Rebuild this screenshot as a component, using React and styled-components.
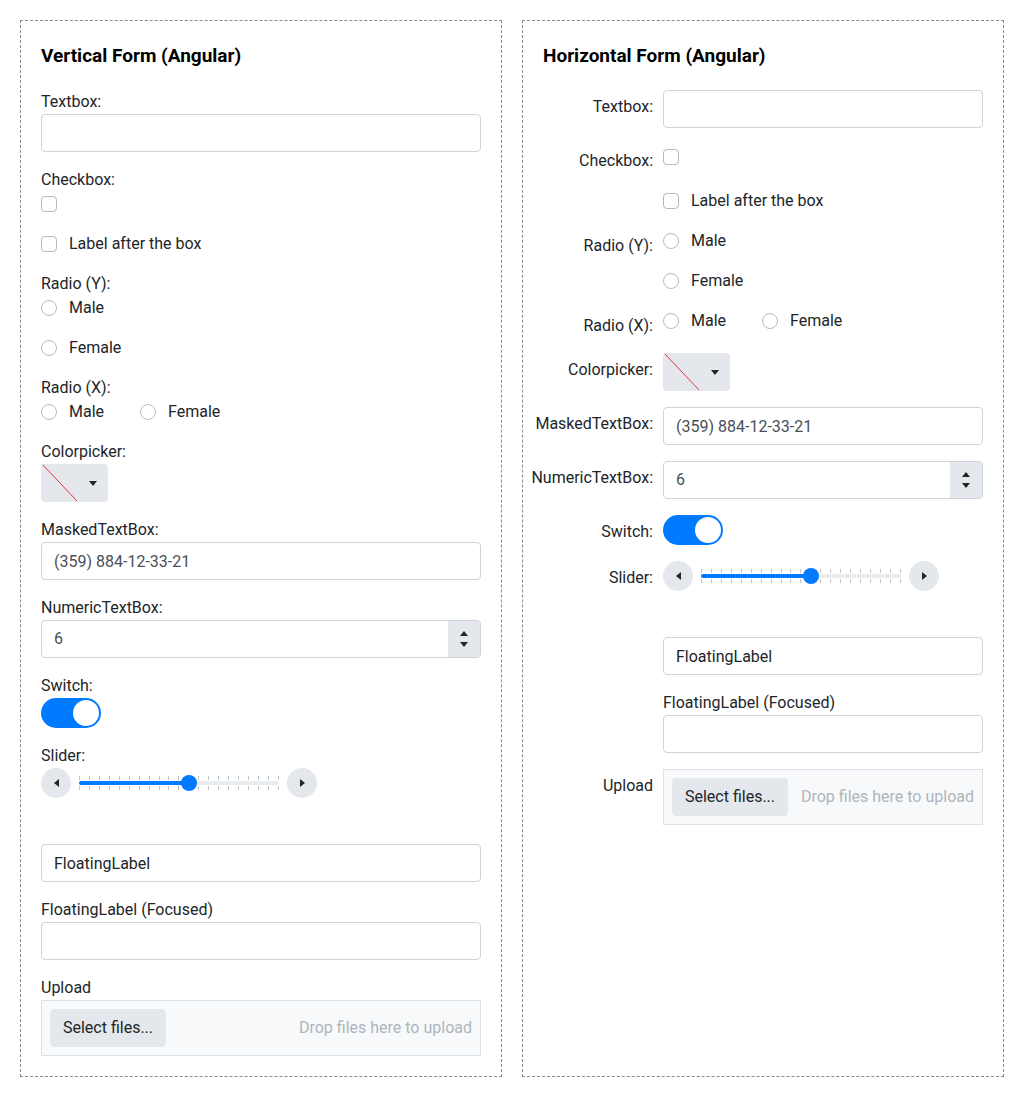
import React from 'react';
import styled, { createGlobalStyle } from 'styled-components';

const Global = createGlobalStyle`
  html, body { margin: 0; padding: 0; background: #fff; }
  body {
    font-family: Roboto, "Liberation Sans", Arial, sans-serif;
    font-size: 16px;
    line-height: 24px;
    color: #212529;
  }
  * { box-sizing: border-box; }
`;

const Page = styled.div`
  display: flex;
  gap: 20px;
  padding: 20px;
  align-items: stretch;
`;

const Panel = styled.section`
  width: 482px;
  border: 1px dashed #8a8a8a;
  padding: 20px;
  display: flex;
  flex-direction: column;
`;

const Title = styled.h3`
  margin: 0 0 20px;
  padding-top: 1px;
  font-size: 19px;
  line-height: 28px;
  font-weight: 700;
  color: #000;
`;

const Stack = styled.div`
  display: flex;
  flex-direction: column;
  gap: 16px;
`;

const Field = styled.div`
  display: flex;
  flex-direction: column;
`;

const Label = styled.label`
  display: block;
  line-height: 24px;
`;

const HRow = styled.div`
  display: flex;
  align-items: flex-start;
  gap: 10px;
`;

const HLabel = styled.label`
  flex: 0 0 110px;
  min-width: 0;
  display: flex;
  justify-content: flex-end;
  white-space: nowrap;
  padding-top: 5px;
  max-height: 28px;
  line-height: 24px;
`;

const HControl = styled.div`
  flex: 1;
  min-width: 0;
  padding-top: ${(p) => p.$pt || 0}px;
`;

const Input = styled.input`
  display: block;
  width: 100%;
  height: 38px;
  border: 1px solid #ced4da;
  border-radius: 4px;
  padding: 0 12px;
  font: inherit;
  color: #495057;
  background: #fff;
  outline: none;
  &::placeholder { color: #212529; opacity: 1; }
`;

const CheckLine = styled.label`
  display: flex;
  align-items: center;
  gap: 12px;
  height: 24px;
`;

const Box = styled.span`
  flex: none;
  width: 16px;
  height: 16px;
  border: 1px solid #b4bac0;
  border-radius: ${(p) => (p.$round ? '50%' : '4px')};
  background: #fff;
`;

const RadioList = styled.div`
  display: flex;
  flex-direction: ${(p) => (p.$row ? 'row' : 'column')};
  gap: ${(p) => (p.$row ? '36px' : '16px')};
`;

const Picker = styled.div`
  width: 67px;
  height: 38px;
  background: #e4e7eb;
  border-radius: 4px;
  display: flex;
  align-items: center;
  overflow: hidden;
`;

const Swatch = styled.svg`
  flex: none;
  width: 36px;
  height: 38px;
  display: block;
`;

const ArrowBox = styled.span`
  flex: 1;
  display: flex;
  justify-content: center;
  align-items: center;
`;

const Tri = styled.span`
  width: 0;
  height: 0;
  border-left: ${(p) => (p.$dir === 'right' ? '5px solid #212529' : '4px solid transparent')};
  border-right: ${(p) => (p.$dir === 'left' ? '5px solid #212529' : '4px solid transparent')};
  border-top: ${(p) =>
    p.$dir === 'down' ? '5px solid #212529' : p.$dir === 'up' ? 'none' : '4px solid transparent'};
  border-bottom: ${(p) =>
    p.$dir === 'up' ? '5px solid #212529' : p.$dir === 'down' ? 'none' : '4px solid transparent'};
  ${(p) => (p.$dir === 'left' ? 'border-left: none;' : '')}
  ${(p) => (p.$dir === 'right' ? 'border-right: none;' : '')}
`;

const NumericWrap = styled.div`
  display: flex;
  height: 38px;
  border: 1px solid #ced4da;
  border-radius: 4px;
  overflow: hidden;
  background: #fff;
`;

const NumInput = styled.input`
  flex: 1;
  min-width: 0;
  border: none;
  padding: 0 12px;
  font: inherit;
  color: #495057;
  outline: none;
  background: transparent;
`;

const Spinner = styled.div`
  flex: 0 0 32px;
  background: #e4e7eb;
  display: flex;
  flex-direction: column;
  align-items: center;
  justify-content: center;
  gap: 6px;
`;

const SwitchTrack = styled.span`
  display: flex;
  align-items: center;
  justify-content: flex-end;
  width: 60px;
  height: 30px;
  border-radius: 15px;
  background: #007bff;
  padding: 0 2px;
`;

const Knob = styled.span`
  width: 26px;
  height: 26px;
  border-radius: 50%;
  background: #fff;
`;

const SliderWrap = styled.div`
  display: flex;
  align-items: center;
  gap: 8px;
  height: 30px;
`;

const SliderBtn = styled.span`
  flex: none;
  width: 30px;
  height: 30px;
  border-radius: 50%;
  background: #e4e7eb;
  display: flex;
  align-items: center;
  justify-content: center;
`;

const TrackArea = styled.div`
  position: relative;
  width: 200px;
  height: 14px;
`;

const Ticks = styled.div`
  display: flex;
  justify-content: space-between;
  height: 14px;
`;

const Tick = styled.span`
  width: 1px;
  height: 14px;
  background: linear-gradient(
    to bottom,
    #bfc5cb 0 4px,
    transparent 4px 10px,
    #bfc5cb 10px 14px
  );
`;

const Track = styled.span`
  position: absolute;
  left: 0;
  right: 0;
  top: 5px;
  height: 4px;
  border-radius: 2px;
  background: #e9ecef;
`;

const Fill = styled.span`
  position: absolute;
  left: 0;
  top: 5px;
  height: 4px;
  border-radius: 2px;
  background: #007bff;
`;

const Thumb = styled.span`
  position: absolute;
  top: -1px;
  width: 16px;
  height: 16px;
  margin-left: -8px;
  border-radius: 50%;
  background: #007bff;
`;

const Floating = styled.div`
  padding-top: 30px;
`;

const Upload = styled.div`
  height: 56px;
  border: 1px solid #dee2e6;
  background: #f8f9fa;
  display: flex;
  align-items: center;
  justify-content: space-between;
  gap: 12px;
  padding: 0 8px;
`;

const SelectBtn = styled.button`
  flex: none;
  width: 116px;
  height: 38px;
  border: none;
  border-radius: 4px;
  background: #e4e7eb;
  font: inherit;
  color: #212529;
  padding: 0;
`;

const Drop = styled.span`
  color: #adb5bd;
  white-space: nowrap;
`;

const Check = ({ children }) => (
  <CheckLine>
    <Box />
    {children}
  </CheckLine>
);

const Radio = ({ children }) => (
  <CheckLine>
    <Box $round />
    {children}
  </CheckLine>
);

const ColorPicker = () => (
  <Picker>
    <Swatch viewBox="0 0 36 38">
      <line x1="1" y1="0" x2="36" y2="37" stroke="#e8323c" strokeWidth="1" />
    </Swatch>
    <ArrowBox>
      <Tri $dir="down" />
    </ArrowBox>
  </Picker>
);

const Numeric = () => (
  <NumericWrap>
    <NumInput value="6" readOnly />
    <Spinner>
      <Tri $dir="up" />
      <Tri $dir="down" />
    </Spinner>
  </NumericWrap>
);

const Switch = () => (
  <SwitchTrack>
    <Knob />
  </SwitchTrack>
);

const Slider = ({ value = 11, max = 20 }) => {
  const pct = (value / max) * 200;
  return (
    <SliderWrap>
      <SliderBtn>
        <Tri $dir="left" />
      </SliderBtn>
      <TrackArea>
        <Ticks>
          {Array.from({ length: max + 1 }, (_, i) => (
            <Tick key={i} />
          ))}
        </Ticks>
        <Track />
        <Fill style={{ width: pct }} />
        <Thumb style={{ left: pct }} />
      </TrackArea>
      <SliderBtn>
        <Tri $dir="right" />
      </SliderBtn>
    </SliderWrap>
  );
};

const UploadBox = () => (
  <Upload>
    <SelectBtn>Select files...</SelectBtn>
    <Drop>Drop files here to upload</Drop>
  </Upload>
);

const VerticalForm = () => (
  <Panel>
    <Title>Vertical Form (Angular)</Title>
    <Stack>
      <Field>
        <Label>Textbox:</Label>
        <Input readOnly />
      </Field>
      <Field>
        <Label>Checkbox:</Label>
        <CheckLine>
          <Box />
        </CheckLine>
      </Field>
      <Field>
        <Check>Label after the box</Check>
      </Field>
      <Field>
        <Label>Radio (Y):</Label>
        <RadioList>
          <Radio>Male</Radio>
          <Radio>Female</Radio>
        </RadioList>
      </Field>
      <Field>
        <Label>Radio (X):</Label>
        <RadioList $row>
          <Radio>Male</Radio>
          <Radio>Female</Radio>
        </RadioList>
      </Field>
      <Field>
        <Label>Colorpicker:</Label>
        <ColorPicker />
      </Field>
      <Field>
        <Label>MaskedTextBox:</Label>
        <Input value="(359) 884-12-33-21" readOnly />
      </Field>
      <Field>
        <Label>NumericTextBox:</Label>
        <Numeric />
      </Field>
      <Field>
        <Label>Switch:</Label>
        <Switch />
      </Field>
      <Field>
        <Label>Slider:</Label>
        <Slider />
      </Field>
      <Floating>
        <Input placeholder="FloatingLabel" readOnly />
      </Floating>
      <Field>
        <Label>FloatingLabel (Focused)</Label>
        <Input readOnly />
      </Field>
      <Field>
        <Label>Upload</Label>
        <UploadBox />
      </Field>
    </Stack>
  </Panel>
);

const HorizontalForm = () => (
  <Panel>
    <Title>Horizontal Form (Angular)</Title>
    <Stack>
      <HRow>
        <HLabel>Textbox:</HLabel>
        <HControl>
          <Input readOnly />
        </HControl>
      </HRow>
      <HRow>
        <HLabel>Checkbox:</HLabel>
        <HControl $pt={1}>
          <CheckLine>
            <Box />
          </CheckLine>
        </HControl>
      </HRow>
      <HRow>
        <HLabel />
        <HControl $pt={1}>
          <Check>Label after the box</Check>
        </HControl>
      </HRow>
      <HRow>
        <HLabel>Radio (Y):</HLabel>
        <HControl>
          <RadioList>
            <Radio>Male</Radio>
            <Radio>Female</Radio>
          </RadioList>
        </HControl>
      </HRow>
      <HRow>
        <HLabel>Radio (X):</HLabel>
        <HControl>
          <RadioList $row>
            <Radio>Male</Radio>
            <Radio>Female</Radio>
          </RadioList>
        </HControl>
      </HRow>
      <HRow>
        <HLabel>Colorpicker:</HLabel>
        <HControl>
          <ColorPicker />
        </HControl>
      </HRow>
      <HRow>
        <HLabel>MaskedTextBox:</HLabel>
        <HControl>
          <Input value="(359) 884-12-33-21" readOnly />
        </HControl>
      </HRow>
      <HRow>
        <HLabel>NumericTextBox:</HLabel>
        <HControl>
          <Numeric />
        </HControl>
      </HRow>
      <HRow>
        <HLabel>Switch:</HLabel>
        <HControl>
          <Switch />
        </HControl>
      </HRow>
      <HRow>
        <HLabel>Slider:</HLabel>
        <HControl>
          <Slider />
        </HControl>
      </HRow>
      <HRow>
        <HLabel />
        <HControl>
          <Floating>
            <Input placeholder="FloatingLabel" readOnly />
          </Floating>
        </HControl>
      </HRow>
      <HRow>
        <HLabel />
        <HControl>
          <Label>FloatingLabel (Focused)</Label>
          <Input readOnly />
        </HControl>
      </HRow>
      <HRow>
        <HLabel>Upload</HLabel>
        <HControl>
          <UploadBox />
        </HControl>
      </HRow>
    </Stack>
  </Panel>
);

export default function App() {
  return (
    <>
      <Global />
      <Page>
        <VerticalForm />
        <HorizontalForm />
      </Page>
    </>
  );
}
